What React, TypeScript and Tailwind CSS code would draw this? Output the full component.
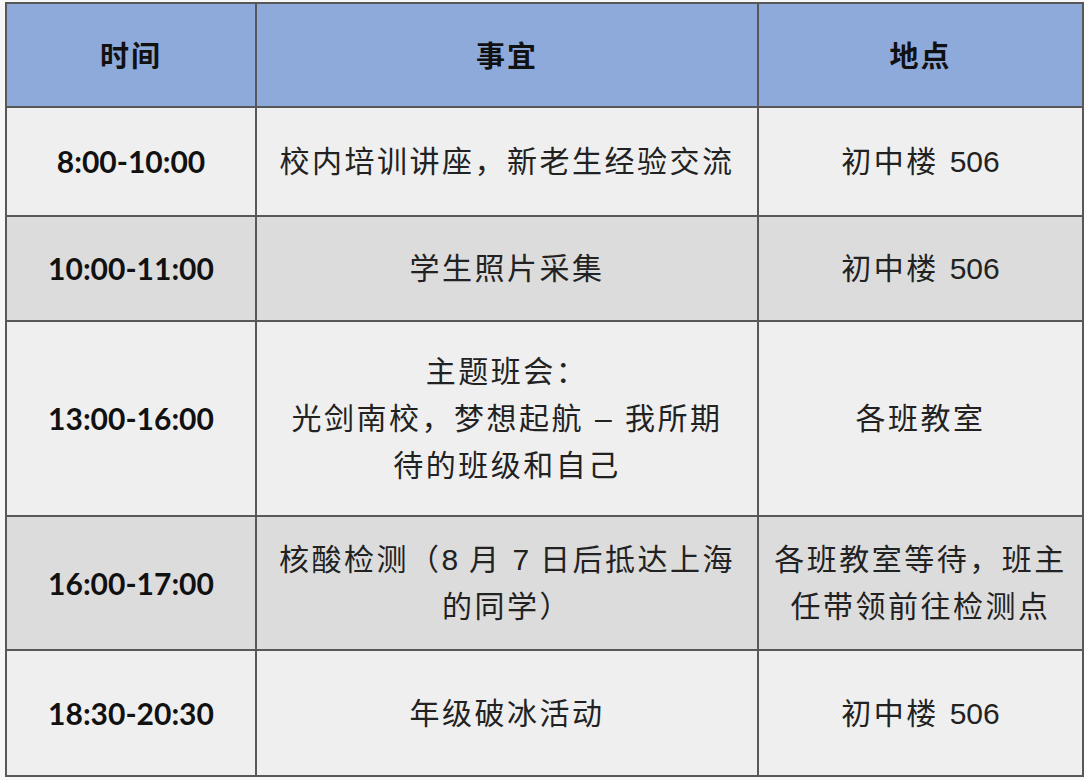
const rows = [
  { time: '8:00-10:00', what: ['校内培训讲座，新老生经验交流'], where: ['初中楼 506'], h: 'h-[109px]', bg: 'bg-[#efefef]' },
  { time: '10:00-11:00', what: ['学生照片采集'], where: ['初中楼 506'], h: 'h-[105px]', bg: 'bg-[#dcdcdc]' },
  {
    time: '13:00-16:00',
    what: ['主题班会：', '光剑南校，梦想起航 – 我所期', '待的班级和自己'],
    where: ['各班教室'],
    h: 'h-[195px]',
    bg: 'bg-[#efefef]',
  },
  {
    time: '16:00-17:00',
    what: ['核酸检测（8 月 7 日后抵达上海', '的同学）'],
    where: ['各班教室等待，班主', '任带领前往检测点'],
    h: 'h-[134px]',
    bg: 'bg-[#dcdcdc]',
  },
  { time: '18:30-20:30', what: ['年级破冰活动'], where: ['初中楼 506'], h: 'h-[126px]', bg: 'bg-[#efefef]' },
];

const cjk = "font-['Liberation_Sans','Noto_Sans_CJK_SC',sans-serif]";

// digits keep normal spacing, CJK gets a little tracking like the source doc
function Line({ text }: { text: string }) {
  const parts = text.split(/(\d+)/);
  return (
    <div>
      {parts.map((p, i) =>
        /^\d+$/.test(p) ? (
          <span key={i} className="tracking-normal">
            {p}
          </span>
        ) : (
          <span key={i}>{p}</span>
        )
      )}
    </div>
  );
}

export default function App() {
  return (
    <div className="min-h-[780px] bg-[#f7f7f7] pl-[5px] pt-[2px]">
      <table className="w-[1077px] table-fixed border-collapse">
        <colgroup>
          <col className="w-[250px]" />
          <col className="w-[502px]" />
          <col className="w-[325px]" />
        </colgroup>
        <thead>
          <tr className="h-[104px] bg-[#8eaadb]">
            {['时间', '事宜', '地点'].map((t) => (
              <th
                key={t}
                className="border-2 border-[#585858] text-center text-[29px] font-bold tracking-[2px] text-[#111] font-['Noto_Sans_CJK_SC',sans-serif]"
              >
                {t}
              </th>
            ))}
          </tr>
        </thead>
        <tbody>
          {rows.map((r) => (
            <tr key={r.time} className={`${r.h} ${r.bg}`}>
              <td className="border-2 border-[#585858] text-center font-['Lato',sans-serif] text-[30px] font-bold text-[#111]">
                {r.time}
              </td>
              <td className={`border-2 border-[#585858] text-center text-[30px] leading-[47px] tracking-[2.5px] text-[#222] ${cjk}`}>
                {r.what.map((l, i) => (
                  <Line key={i} text={l} />
                ))}
              </td>
              <td className={`border-2 border-[#585858] text-center text-[30px] leading-[47px] tracking-[2.5px] text-[#222] ${cjk}`}>
                {r.where.map((l, i) => (
                  <Line key={i} text={l} />
                ))}
              </td>
            </tr>
          ))}
        </tbody>
      </table>
    </div>
  );
}
